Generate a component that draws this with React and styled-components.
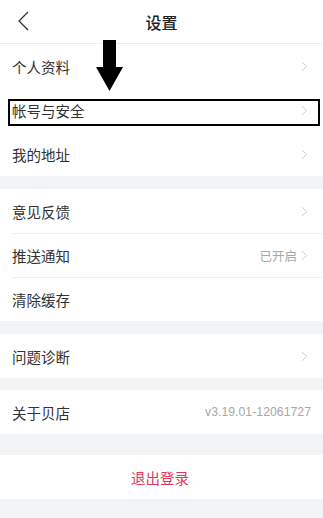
import styled, { createGlobalStyle } from "styled-components";

const GlobalStyle = createGlobalStyle`
  html, body {
    margin: 0;
    padding: 0;
    background: #f2f3f5;
  }
  * { box-sizing: border-box; }
`;

const Page = styled.div`
  position: relative;
  width: 323px;
  min-height: 518px;
  background: #f2f3f5;
  font-family: "Noto Sans CJK SC", "Noto Sans", sans-serif;
  color: #333;
`;

const Header = styled.div`
  position: relative;
  height: 44px;
  display: flex;
  align-items: center;
  justify-content: center;
  background: #fff;
  border-bottom: 1px solid #ececec;
`;

const BackButton = styled.div`
  position: absolute;
  left: 17px;
  top: 11px;
  display: flex;
`;

const Title = styled.div`
  font-size: 16px;
  font-weight: 500;
  color: #222;
`;

const Group = styled.div`
  background: #fff;
  margin-bottom: ${(p) => p.$gap}px;
`;

const Row = styled.div`
  position: relative;
  height: 44px;
  display: flex;
  align-items: center;
  padding: 0 15px 0 12px;
  justify-content: ${(p) => (p.$center ? "center" : "space-between")};

  & + &::before {
    content: "";
    position: absolute;
    top: 0;
    left: 12px;
    right: 0;
    height: 1px;
    background: #ededed;
  }

  ${(p) =>
    p.$highlight &&
    `
    &::after {
      content: "";
      position: absolute;
      left: 8px;
      right: 3px;
      top: 11px;
      height: 23px;
      border: 2px solid #000;
    }
  `}
`;

const Label = styled.span`
  font-size: 14.5px;
  color: #333;
`;

const Right = styled.div`
  display: flex;
  align-items: center;
  gap: 4px;
`;

const Value = styled.span`
  font-size: ${(p) => (p.$latin ? "12.3px" : "12.5px")};
  margin-right: ${(p) => (p.$latin ? "-3px" : "0")};
  color: #a8a8a8;
  font-family: ${(p) => (p.$latin ? '"Liberation Sans", Arial, sans-serif' : '"Noto Sans CJK SC", sans-serif')};
`;

const Logout = styled.span`
  font-size: 14.5px;
  color: #e2365e;
`;

const ArrowMark = styled.svg`
  position: absolute;
  left: 96px;
  top: 40px;
`;

const Chevron = () => (
  <svg width="7" height="11" viewBox="0 0 7 11">
    <path d="M1 1 L5.5 5.5 L1 10" fill="none" stroke="#cfcfcf" strokeWidth="1" />
  </svg>
);

const BackIcon = () => (
  <svg width="14" height="20" viewBox="0 0 14 20">
    <path d="M11 1 L2 10 L11 19" fill="none" stroke="#333" strokeWidth="1.3" />
  </svg>
);

const Item = ({ label, value, latin, chevron = true, highlight }) => (
  <Row $highlight={highlight}>
    <Label>{label}</Label>
    <Right>
      {value && <Value $latin={latin}>{value}</Value>}
      {chevron && <Chevron />}
    </Right>
  </Row>
);

export default function App() {
  return (
    <>
      <GlobalStyle />
      <Page>
        <Header>
          <BackButton>
            <BackIcon />
          </BackButton>
          <Title>设置</Title>
        </Header>
        <Group $gap={13}>
          <Item label="个人资料" />
          <Item label="帐号与安全" highlight />
          <Item label="我的地址" />
        </Group>
        <Group $gap={13}>
          <Item label="意见反馈" />
          <Item label="推送通知" value="已开启" />
          <Item label="清除缓存" chevron={false} />
        </Group>
        <Group $gap={12}>
          <Item label="问题诊断" />
        </Group>
        <Group $gap={21}>
          <Item label="关于贝店" value="v3.19.01-12061727" latin chevron={false} />
        </Group>
        <Group $gap={0}>
          <Row $center>
            <Logout>退出登录</Logout>
          </Row>
        </Group>
        <ArrowMark width="28" height="51" viewBox="0 0 28 51">
          <rect x="7" y="0" width="13" height="27" fill="#000" />
          <polygon points="0,27 27,27 13.5,51" fill="#000" />
        </ArrowMark>
      </Page>
    </>
  );
}
